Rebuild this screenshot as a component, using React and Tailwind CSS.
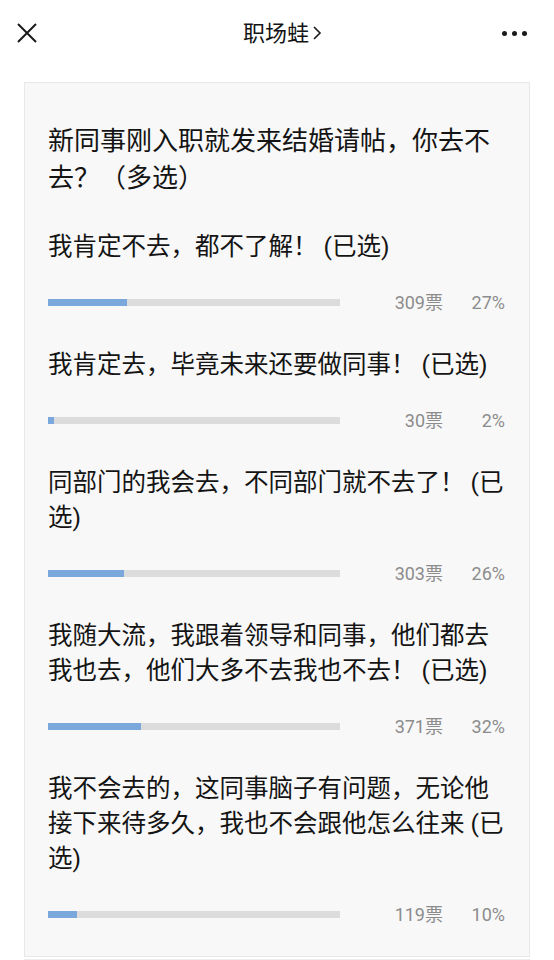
import React from 'react';

const options = [
    { text: '我肯定不去，都不了解！ (已选)', votes: 309, pct: 27 },
    { text: '我肯定去，毕竟未来还要做同事！ (已选)', votes: 30, pct: 2 },
    { text: '同部门的我会去，不同部门就不去了！ (已选)', votes: 303, pct: 26 },
    { text: '我随大流，我跟着领导和同事，他们都去我也去，他们大多不去我也不去！ (已选)', votes: 371, pct: 32 },
    { text: '我不会去的，这同事脑子有问题，无论他接下来待多久，我也不会跟他怎么往来 (已选)', votes: 119, pct: 10 },
];

function OptionRow({ option }) {
    return (
        <div className="mt-[33px]">
            <p className="text-[24.5px] leading-[35px] text-[#141414]">{option.text}</p>
            <div className="mt-[26px] flex items-center h-6">
                <div className="w-[292px] h-[7px] bg-[#dcdcdc]">
                    <div className="h-full bg-[#7aa7dc]" style={{ width: `${option.pct}%` }} />
                </div>
                <span className="w-[103px] text-right text-[18px] text-[#8c8c8c]">{option.votes}票</span>
                <span className="w-[62px] text-right text-[18px] text-[#8c8c8c]">{option.pct}%</span>
            </div>
        </div>
    );
}

export default function App() {
    return (
        <div
            className="w-[554px] h-[960px] overflow-hidden bg-white"
            style={{ fontFamily: 'Roboto, "Noto Sans CJK SC", sans-serif' }}
        >
            {/* Top bar */}
            <div className="h-[66px] flex items-center justify-between px-[17px]">
                <svg width="20" height="20" viewBox="0 0 20 20" className="text-[#1a1a1a]">
                    <path d="M1 1 L19 19 M19 1 L1 19" stroke="currentColor" strokeWidth="2" fill="none" />
                </svg>
                <div className="flex items-center gap-[3px] text-[22px] text-[#141414] ml-[26px]">
                    <span>职场蛙</span>
                    <svg width="10" height="16" viewBox="0 0 10 16">
                        <path d="M2 2 L8 8 L2 14" stroke="#1a1a1a" strokeWidth="1.6" fill="none" />
                    </svg>
                </div>
                <div className="flex items-center gap-[5px] pr-[10px]">
                    <span className="w-[5px] h-[5px] rounded-full bg-[#1a1a1a]" />
                    <span className="w-[5px] h-[5px] rounded-full bg-[#1a1a1a]" />
                    <span className="w-[5px] h-[5px] rounded-full bg-[#1a1a1a]" />
                </div>
            </div>

            {/* Poll card */}
            <div className="mx-[24px] mt-[16px] border border-[#e8e8e8] bg-[#f8f8f8] pl-[23px] pr-[22px] pt-[40px] pb-[30px]">
                <p className="text-[26px] leading-[37px] text-[#141414]">
                    新同事刚入职就发来结婚请帖，你去不去？（多选）
                </p>
                <div className="-mt-[1px]">
                    {options.map((o, i) => (
                        <OptionRow key={i} option={o} />
                    ))}
                </div>
            </div>
            <div className="mx-[24px] mt-[2px] h-4 border-t border-x border-[#ececec]" />
        </div>
    );
}
